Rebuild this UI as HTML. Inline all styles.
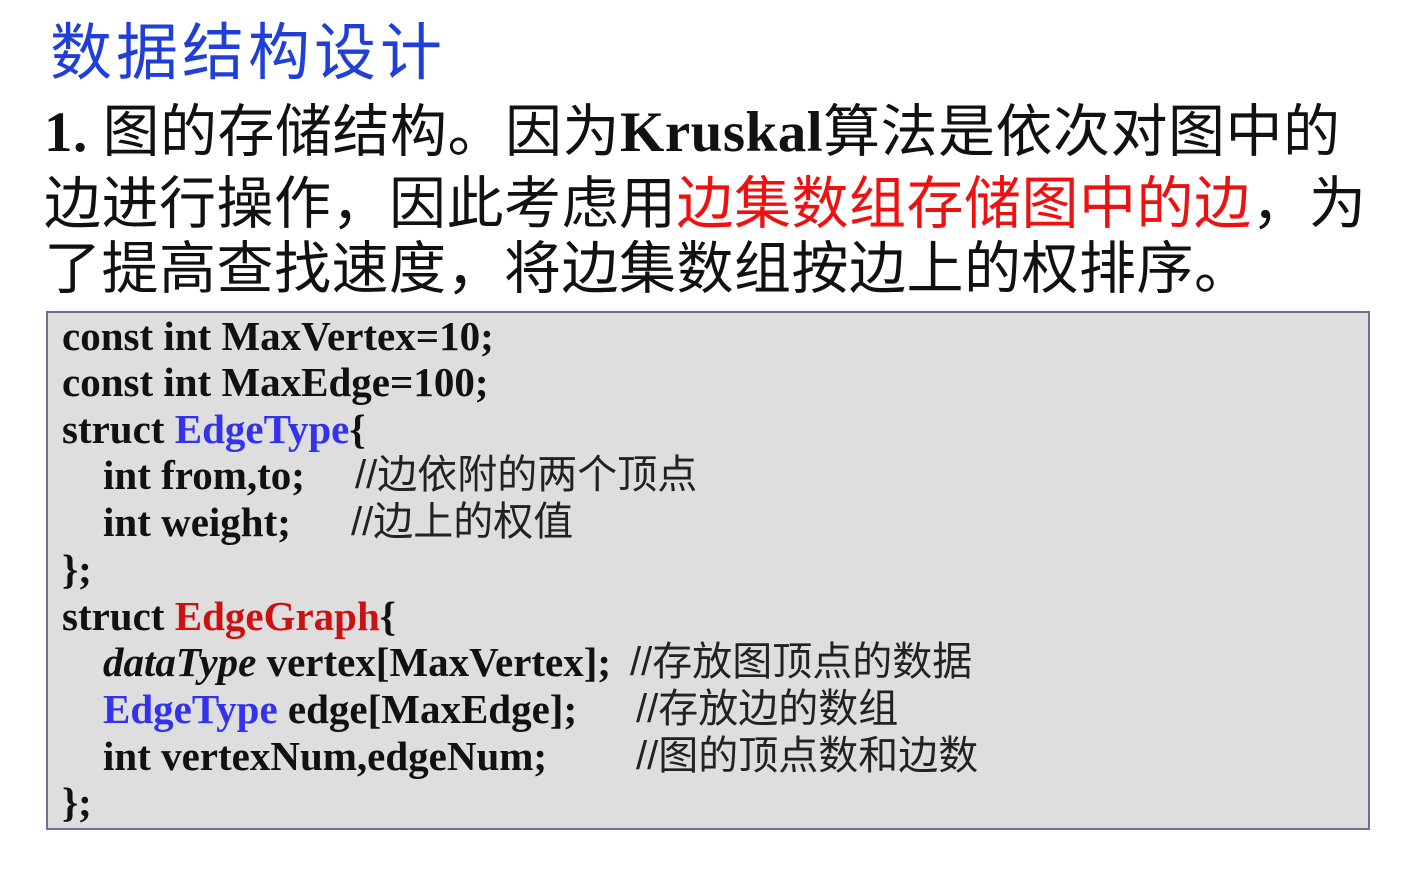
<!DOCTYPE html>
<html><head><meta charset="utf-8"><style>
html,body{margin:0;padding:0;}
body{width:1422px;height:872px;background:#fff;position:relative;overflow:hidden;font-family:"Liberation Serif","Noto Sans CJK SC",serif;}
.a{position:absolute;white-space:nowrap;}
.title{left:50px;top:16px;font-size:62px;color:#1f3fd6;font-family:"Liberation Sans","Noto Sans CJK SC",sans-serif;line-height:76px;letter-spacing:4px;}
.p{left:44px;font-size:57px;line-height:66px;color:#111;font-family:"Liberation Serif","Noto Sans CJK SC",serif;letter-spacing:0.5px;}
.p b{font-weight:bold;}
.red{color:#ee1111;}
.box{left:46px;top:311px;width:1320px;height:515px;background:#dedede;border:2px solid #6d6d98;}
.c{font-size:41px;line-height:46.6px;font-weight:bold;color:#111;font-family:"Liberation Serif",serif;}
.cm{font-size:40px;line-height:46.6px;font-weight:normal;color:#222;font-family:"Liberation Sans","Noto Sans CJK SC",sans-serif;}
.blue{color:#3333ee;}
.dred{color:#cc1111;}
</style></head><body>
<div class="a title">数据结构设计</div>
<div class="a p" style="top:100px"><b>1.</b> 图的存储结构。因为<b>Kruskal</b>算法是依次对图中的</div>
<div class="a p" style="top:172px">边进行操作，因此考虑用<span class="red">边集数组存储图中的边</span>，为</div>
<div class="a p" style="top:237px">了提高查找速度，将边集数组按边上的权排序。</div>
<div class="a box"></div>
<div class="a c" style="left:62px;top:313px">const int MaxVertex=10;</div>
<div class="a c" style="left:62px;top:359px">const int MaxEdge=100;</div>
<div class="a c" style="left:62px;top:406px">struct <span class="blue">EdgeType</span>{</div>
<div class="a c" style="left:103px;top:452px">int from,to;</div>
<div class="a cm" style="left:355px;top:452px">//边依附的两个顶点</div>
<div class="a c" style="left:103px;top:499px">int weight;</div>
<div class="a cm" style="left:351px;top:499px">//边上的权值</div>
<div class="a c" style="left:62px;top:546px">};</div>
<div class="a c" style="left:62px;top:593px">struct <span class="dred">EdgeGraph</span>{</div>
<div class="a c" style="left:103px;top:639px"><i>dataType</i> vertex[MaxVertex];</div>
<div class="a cm" style="left:630px;top:639px">//存放图顶点的数据</div>
<div class="a c" style="left:103px;top:686px"><span class="blue">EdgeType</span> edge[MaxEdge];</div>
<div class="a cm" style="left:636px;top:686px">//存放边的数组</div>
<div class="a c" style="left:103px;top:733px">int vertexNum,edgeNum;</div>
<div class="a cm" style="left:636px;top:733px">//图的顶点数和边数</div>
<div class="a c" style="left:62px;top:779px">};</div>
</body></html>
